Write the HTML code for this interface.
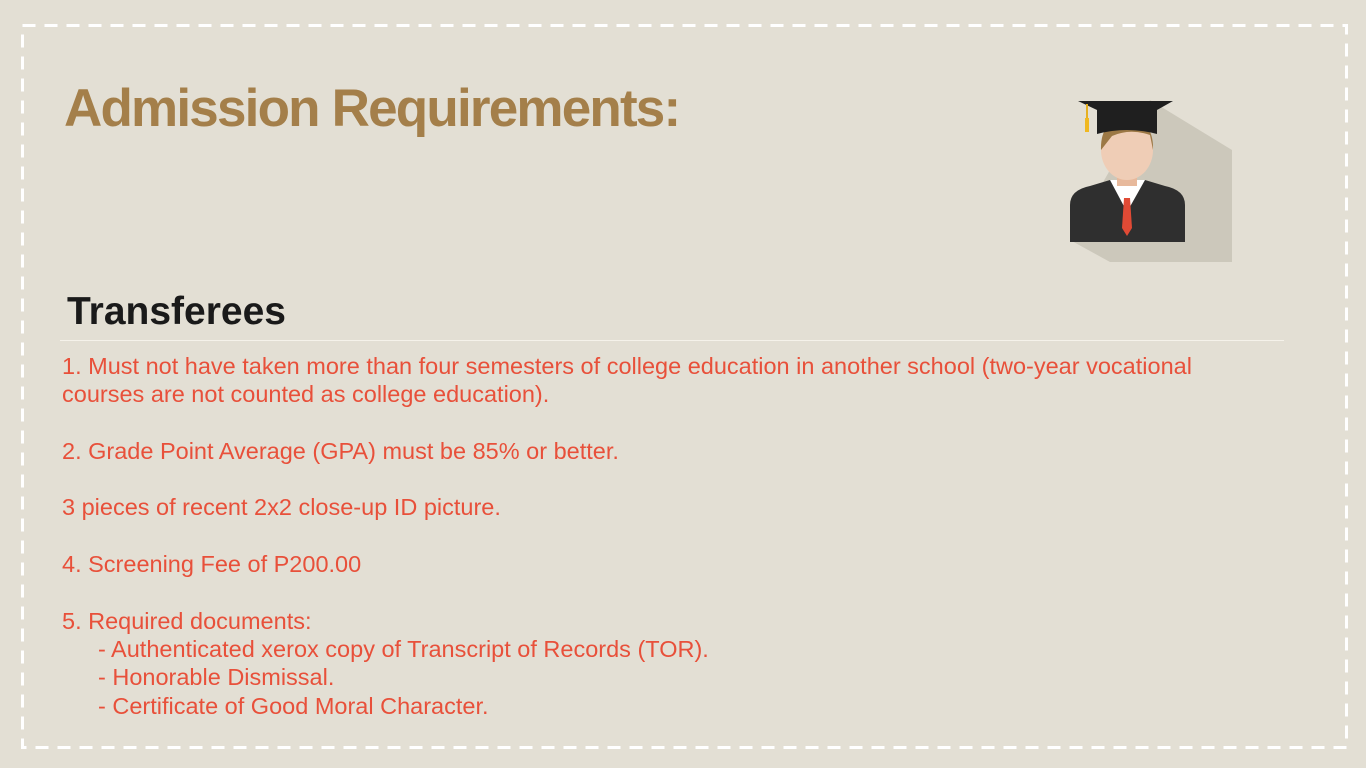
<!DOCTYPE html>
<html><head><meta charset="utf-8"><style>
body{margin:0;width:1366px;height:768px;background:#e3dfd4;position:relative;overflow:hidden;font-family:"Liberation Sans",Arial,sans-serif}
h1{position:absolute;left:64px;top:78px;margin:0;font-size:53px;font-weight:bold;color:#a47f4a;letter-spacing:-1.8px}
h2{position:absolute;left:67px;top:290px;margin:0;font-size:39px;font-weight:bold;color:#1a1a1a}
.hr{position:absolute;left:60px;top:340px;width:1224px;height:1px;background:#f5f2ea}
.t{position:absolute;left:62px;top:352px;font-size:23.5px;line-height:28.3px;color:#e8503a;white-space:pre}
.i{padding-left:36px}
</style></head><body>
<svg style="position:absolute;left:0;top:0" width="1366" height="768"><rect x="22.5" y="25.5" width="1324" height="722" fill="none" stroke="#fff" stroke-width="3" stroke-dasharray="13 9"/></svg>
<h1>Admission Requirements:</h1>
<svg style="position:absolute;left:1040px;top:80px" width="200" height="200" viewBox="1040 80 200 200">
<polygon points="1150,100 1232,150 1232,262 1110,262 1070,240" fill="#ccc8bb"/>
<path d="M1070,205 Q1070,190 1090,186 L1110,180 L1145,180 L1165,186 Q1185,190 1185,205 L1185,242 L1070,242Z" fill="#2f2f2f"/>
<path d="M1110,180 L1127,212 L1145,180Z" fill="#fff"/>
<path d="M1124,198 L1130,198 L1132,228 L1127,236 L1122,228Z" fill="#e04a35"/>
<rect x="1117" y="170" width="20" height="16" fill="#e7b99c"/>
<ellipse cx="1127" cy="150" rx="26" ry="30" fill="#efcdb6"/>
<path d="M1101,150 Q1100,120 1127,118 Q1154,120 1153,150 L1150,135 Q1130,128 1112,136 Z" fill="#9c7845"/>
<path d="M1078,101 L1173,101 L1157,110 L1157,134 Q1127,126 1097,134 L1097,110Z" fill="#1f1f1f"/>
<rect x="1086" y="104" width="2" height="16" fill="#e6b020"/>
<rect x="1085" y="118" width="4" height="14" fill="#f0b820"/>
</svg>
<h2>Transferees</h2>
<div class="hr"></div>
<div class="t">1. Must not have taken more than four semesters of college education in another school (two-year vocational
courses are not counted as college education).

2. Grade Point Average (GPA) must be 85% or better.

3 pieces of recent 2x2 close-up ID picture.

4. Screening Fee of P200.00

5. Required documents:
<span class="i">- Authenticated xerox copy of Transcript of Records (TOR).</span>
<span class="i">- Honorable Dismissal.</span>
<span class="i">- Certificate of Good Moral Character.</span></div>
</body></html>
